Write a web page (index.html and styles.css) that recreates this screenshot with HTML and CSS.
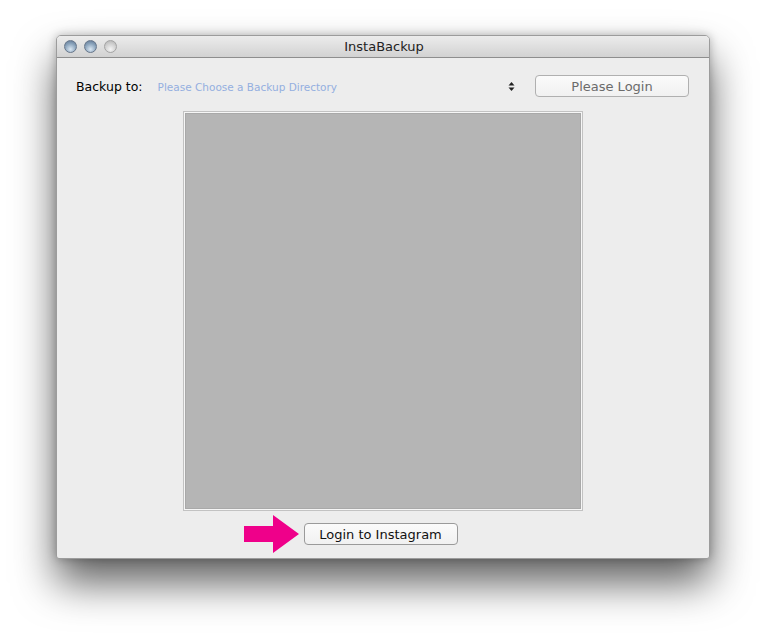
FILE: index.html
```html
<!DOCTYPE html>
<html lang="en">

<head>
  <meta charset="utf-8">
  <title>InstaBackup</title>
  <link rel="stylesheet" href="styles.css">
</head>

<body>
  <!-- 窗口 -->
  <div class="window">
    <div class="titleBar">
      <div class="lights">
        <span class="light"></span>
        <span class="light"></span>
        <span class="light off"></span>
      </div>
      <div class="title">InstaBackup</div>
    </div>

    <div class="content">
      <!-- 顶部一行 -->
      <div class="topRow">
        <span class="label">Backup to:</span>
        <div class="chooser">
          <span class="placeholder">Please Choose a Backup Directory</span>
          <svg class="stepper" width="7" height="11" viewBox="0 0 7 11">
            <path d="M3.5 1 L6.5 4.5 L0.5 4.5 Z" fill="#222" />
            <path d="M3.5 10 L6.5 6.5 L0.5 6.5 Z" fill="#222" />
          </svg>
        </div>
        <div class="btn btnTop">Please Login</div>
      </div>

      <!-- 图片区域 -->
      <div class="picBox">
        <div class="picInner"></div>
      </div>

      <!-- 底部按钮 -->
      <div class="bottomRow">
        <div class="loginWrap">
          <svg class="arrow" width="56" height="38" viewBox="0 0 56 38">
            <path d="M0 11 L29 11 L29 0 L55 19 L29 38 L29 27 L0 27 Z" fill="#ef008a" />
          </svg>
          <div class="btn btnLogin">Login to Instagram</div>
        </div>
      </div>
    </div>
  </div>
</body>

</html>
```

FILE: styles.css
```css
* {
  margin: 0;
  padding: 0;
  box-sizing: border-box;
}

html,
body {
  height: 100%;
}

body {
  background: #fff;
  font-family: "DejaVu Sans", "Liberation Sans", sans-serif;
  padding-top: 35px;
  padding-left: 56px;
}

.window {
  width: 654px;
  height: 524px;
  border: 1px solid #9c9c9c;
  border-radius: 5px 5px 3px 3px;
  background: #ededed;
  box-shadow: 0 24px 42px rgba(0, 0, 0, 0.62), 0 0 10px rgba(0, 0, 0, 0.25);
  display: flex;
  flex-direction: column;
  overflow: hidden;
}

/* 标题栏 */
.titleBar {
  height: 22px;
  background: linear-gradient(#ececec, #d2d2d2);
  border-bottom: 1px solid #8e8e8e;
  position: relative;
  display: flex;
  align-items: center;
  justify-content: center;
}

.lights {
  position: absolute;
  left: 7px;
  top: 4px;
  display: flex;
  gap: 7px;
}

.light {
  width: 13px;
  height: 13px;
  border-radius: 50%;
  border: 1px solid #66768a;
  background: radial-gradient(circle at 50% 75%, #d9e6f2 0%, #8ca5bd 55%, #5b7390 100%);
}

.light.off {
  border-color: #a3a3a3;
  background: radial-gradient(circle at 50% 75%, #f4f4f4 0%, #d0d0d0 55%, #b0b0b0 100%);
}

.title {
  font-size: 13px;
  color: #222;
  margin-left: 2px;
}

.content {
  flex: 1;
  display: flex;
  flex-direction: column;
  align-items: center;
  padding: 17px 19px 0 19px;
}

.topRow {
  width: 100%;
  height: 22px;
  display: flex;
  align-items: center;
}

.label {
  font-size: 12.5px;
  color: #000;
  margin-right: 15px;
  margin-top: 1px;
}

.chooser {
  flex: 1;
  display: flex;
  align-items: center;
  justify-content: space-between;
  padding-right: 20px;
}

.placeholder {
  font-size: 10.5px;
  color: #94afe0;
  margin-top: 1px;
}

.stepper {
  display: block;
}

.btn {
  height: 22px;
  border: 1px solid #9a9a9a;
  border-radius: 4px;
  background: linear-gradient(#fbfbfb, #f1f1f1);
  display: flex;
  align-items: center;
  justify-content: center;
  font-size: 13px;
}

.btnTop {
  width: 154px;
  color: #6b6b6b;
  border-color: #b0b0b0;
  margin-right: 1px;
}

.picBox {
  width: 400px;
  height: 400px;
  margin-top: 14px;
  border: 1px solid #c2c2c2;
  padding: 1px;
  background: #f6f6f6;
}

.picInner {
  width: 100%;
  height: 100%;
  background: #b5b5b5;
  border: 1px solid #a9a9a9;
}

.bottomRow {
  margin-top: 12px;
  width: 100%;
  display: flex;
  justify-content: center;
}

.loginWrap {
  position: relative;
  margin-right: 5px;
}

.btnLogin {
  width: 154px;
  color: #111;
}

.arrow {
  position: absolute;
  left: -60px;
  top: -8px;
}
```
